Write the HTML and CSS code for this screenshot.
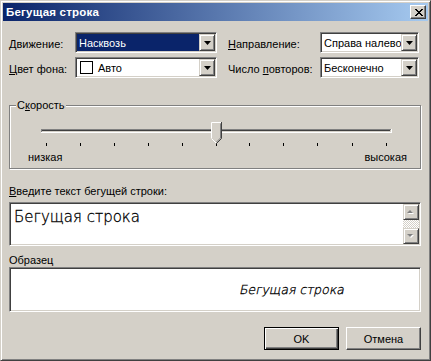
FILE: index.html
```html
<!DOCTYPE html>
<html lang="ru">
<head>
  <meta charset="UTF-8" />
  <title>Бегущая строка</title>
  <link rel="stylesheet" href="styles.css">
</head>
<body>
  <div class="window">
    <div class="titlebar">
      <span class="title">Бегущая строка</span>
      <button class="close-btn" aria-label="Закрыть">
        <svg width="8" height="7" viewBox="0 0 8 7">
          <path d="M0 0h2v1h-2zM6 0h2v1h-2zM1 1h2v1h-2zM5 1h2v1h-2zM2 2h4v1h-4zM3 3h2v1h-2zM2 4h4v1h-4zM1 5h2v1h-2zM5 5h2v1h-2zM0 6h2v1h-2zM6 6h2v1h-2z" fill="#000"/>
        </svg>
      </button>
    </div>

    <div class="content">
      <div class="options">
        <label class="label"><span><u>Д</u>вижение:</span></label>
        <div class="combo">
          <span class="combo-value selected">Насквозь</span>
          <span class="drop-btn"><svg width="7" height="4" viewBox="0 0 7 4"><path d="M0 0h7l-3.5 4z" fill="#000"/></svg></span>
        </div>
        <span></span>
        <label class="label"><span><u>Н</u>аправление:</span></label>
        <div class="combo">
          <span class="combo-value">Справа налево</span>
          <span class="drop-btn"><svg width="7" height="4" viewBox="0 0 7 4"><path d="M0 0h7l-3.5 4z" fill="#000"/></svg></span>
        </div>

        <label class="label"><span><u>Ц</u>вет фона:</span></label>
        <div class="combo">
          <span class="combo-value"><span class="swatch"></span>Авто</span>
          <span class="drop-btn"><svg width="7" height="4" viewBox="0 0 7 4"><path d="M0 0h7l-3.5 4z" fill="#000"/></svg></span>
        </div>
        <span></span>
        <label class="label"><span>Число <u>п</u>овторов:</span></label>
        <div class="combo">
          <span class="combo-value">Бесконечно</span>
          <span class="drop-btn"><svg width="7" height="4" viewBox="0 0 7 4"><path d="M0 0h7l-3.5 4z" fill="#000"/></svg></span>
        </div>
      </div>

      <fieldset class="speed">
        <legend>С<u>к</u>орость</legend>
        <div class="slider-wrap">
          <svg class="slider" width="360" height="27" viewBox="0 0 360 27">
            <!-- track -->
            <path d="M5 9.5H355M5.5 9V13" stroke="#808080"/>
            <path d="M6 10.5H354" stroke="#404040"/>
            <path d="M5 12.5H356M355.5 9V13" stroke="#fff"/>
            <!-- ticks -->
            <g fill="#000">
              <rect x="10" y="23" width="1" height="3"/>
              <rect x="44" y="23" width="1" height="3"/>
              <rect x="78" y="23" width="1" height="3"/>
              <rect x="112" y="23" width="1" height="3"/>
              <rect x="146" y="23" width="1" height="3"/>
              <rect x="180" y="23" width="1" height="3"/>
              <rect x="213" y="23" width="1" height="3"/>
              <rect x="247" y="23" width="1" height="3"/>
              <rect x="281" y="23" width="1" height="3"/>
              <rect x="316" y="23" width="1" height="3"/>
              <rect x="350" y="23" width="1" height="3"/>
            </g>
            <!-- thumb -->
            <path d="M175 2h11v16l-5.5 5.5L175 18z" fill="#d4d0c8"/>
            <path d="M175.5 18V2.5H185" stroke="#fff" fill="none"/>
            <path d="M175.5 18.5L180 23" stroke="#fff" fill="none"/>
            <path d="M185.5 2V18.5L180.5 23.5" stroke="#404040" fill="none"/>
            <path d="M184.5 3.5V18L180.5 22" stroke="#808080" fill="none"/>
          </svg>
          <div class="slider-labels">
            <span>низкая</span>
            <span>высокая</span>
          </div>
        </div>
      </fieldset>

      <label class="field-label"><u>В</u>ведите текст бегущей строки:</label>
      <div class="text-box">
        <div class="text-value">Бегущая строка</div>
        <div class="scrollbar">
          <span class="scroll-btn"><svg width="8" height="5" viewBox="0 0 8 5"><path d="M4 1l3 3H1z" fill="#fff"/><path d="M3 0l3 3H0z" fill="#808080"/></svg></span>
          <span class="scroll-track"></span>
          <span class="scroll-btn"><svg width="8" height="5" viewBox="0 0 8 5"><path d="M1 1h6l-3 3z" fill="#fff"/><path d="M0 0h6l-3 3z" fill="#808080"/></svg></span>
        </div>
      </div>

      <div class="field-label sample-label">Образец</div>
      <div class="preview">
        <span class="preview-text">Бегущая строка</span>
      </div>

      <div class="buttons">
        <button class="btn default">OK</button>
        <button class="btn">Отмена</button>
      </div>
    </div>
  </div>
</body>
</html>
```

FILE: styles.css
```css
* { margin: 0; padding: 0; box-sizing: border-box; }

html, body {
  background-color: #d4d0c8;
  font-family: 'Liberation Sans', Arial, sans-serif;
  font-size: 11px;
  color: #000;
}

u { text-decoration: underline; text-underline-offset: 1px; }

.window {
  width: 431px;
  height: 361px;
  background-color: #d4d0c8;
  border: 1px solid;
  border-color: #d4d0c8 #404040 #404040 #d4d0c8;
  box-shadow: inset 1px 1px #fff, inset -1px -1px #808080;
  padding: 2px;
  display: flex;
  flex-direction: column;
}

.titlebar {
  height: 18px;
  display: flex;
  justify-content: space-between;
  align-items: center;
  padding: 0 2px 0 3px;
  background: linear-gradient(to right, #0a246a, #a6caf0);
}

.title {
  color: #fff;
  font-weight: bold;
  font-size: 11.5px;
  letter-spacing: 0.2px;
}

.close-btn {
  width: 16px;
  height: 14px;
  display: flex;
  align-items: center;
  justify-content: center;
  background-color: #d4d0c8;
  border: 1px solid;
  border-color: #fff #404040 #404040 #fff;
  box-shadow: inset -1px -1px #808080;
  padding-left: 1px;
}

.content {
  flex: 1;
  padding: 11px 7px 0 6px;
  display: flex;
  flex-direction: column;
}

/* Top options */
.options {
  display: grid;
  grid-template-columns: 66px 142px 11px 92px 99px;
  grid-template-rows: 21px 21px;
  row-gap: 4px;
}

.label {
  display: flex;
  align-items: center;
  padding-top: 2px;
  white-space: nowrap;
}

.combo {
  display: flex;
  background-color: #fff;
  border: 1px solid;
  border-color: #808080 #fff #fff #808080;
  box-shadow: inset 1px 1px #404040, inset -1px -1px #d4d0c8;
  padding: 1px;
}

.combo-value {
  flex: 1;
  display: flex;
  align-items: center;
  padding-left: 2px;
  white-space: nowrap;
  overflow: hidden;
}

.combo-value.selected {
  background-color: #0a246a;
  color: #fff;
}

.swatch {
  width: 13px;
  height: 13px;
  border: 1px solid #000;
  background-color: #fff;
  margin: 0 5px 0 1px;
}

.drop-btn {
  width: 16px;
  flex-shrink: 0;
  display: flex;
  align-items: center;
  justify-content: center;
  background-color: #d4d0c8;
  border: 1px solid;
  border-color: #d4d0c8 #404040 #404040 #d4d0c8;
  box-shadow: inset 1px 1px #fff, inset -1px -1px #808080;
}

/* Speed group */
.speed {
  margin: 21px 0 0 0;
  border: 1px solid #808080;
  box-shadow: inset 1px 1px #fff, 1px 1px #fff;
  padding: 8px 13px 4px 6px;
}

.speed legend {
  line-height: 13px;
  padding: 0 1px;
  background-color: #d4d0c8;
}

.slider-wrap {
  margin-left: 12px;
}

.slider {
  display: block;
  margin-left: 8px;
}

.slider-labels {
  display: flex;
  justify-content: space-between;
  line-height: 14px;
  margin-top: 3px;
}

/* Text fields */
.field-label {
  display: block;
  line-height: 14px;
  margin-top: 15px;
  margin-bottom: 4px;
}

.sample-label {
  margin-top: 7px;
  margin-bottom: 0;
}

.text-box,
.preview {
  background-color: #fff;
  border: 1px solid;
  border-color: #808080 #fff #fff #808080;
  box-shadow: inset 1px 1px #404040, inset -1px -1px #d4d0c8;
  padding: 1px;
}

.text-box {
  height: 44px;
  display: flex;
}

.text-value {
  flex: 1;
  padding: 4px 3px;
  font-family: 'DejaVu Sans', sans-serif;
  font-weight: 200;
  font-size: 15px;
  line-height: 18px;
  -webkit-text-stroke: 0.3px #000;
}

.scrollbar {
  width: 16px;
  display: flex;
  flex-direction: column;
}

.scroll-btn {
  height: 16px;
  display: flex;
  align-items: center;
  justify-content: center;
  background-color: #d4d0c8;
  border: 1px solid;
  border-color: #d4d0c8 #404040 #404040 #d4d0c8;
  box-shadow: inset 1px 1px #fff, inset -1px -1px #808080;
}

.scroll-track {
  flex: 1;
  background: repeating-conic-gradient(#d4d0c8 0 25%, #fff 0 50%) 0 0 / 2px 2px;
}

.preview {
  height: 45px;
  display: flex;
  align-items: center;
  padding-left: 230px;
}

/* thin slanted face: the light weight has no italic of its own */
.preview-text {
  display: inline-block;
  font-family: 'DejaVu Sans', sans-serif;
  font-weight: 200;
  font-size: 12.5px;
  transform: skewX(-12deg);
  -webkit-text-stroke: 0.3px #000;
}

/* Buttons */
.buttons {
  display: flex;
  justify-content: flex-end;
  gap: 7px;
  margin-top: 15px;
}

.btn {
  width: 75px;
  height: 23px;
  font-family: 'Liberation Sans', Arial, sans-serif;
  font-size: 11px;
  background-color: #d4d0c8;
  border: 1px solid;
  border-color: #fff #404040 #404040 #fff;
  box-shadow: inset -1px -1px #808080;
}

.btn.default {
  border-color: #000;
  box-shadow: inset 1px 1px #fff, inset -1px -1px #404040, inset -2px -2px #808080;
}
```
